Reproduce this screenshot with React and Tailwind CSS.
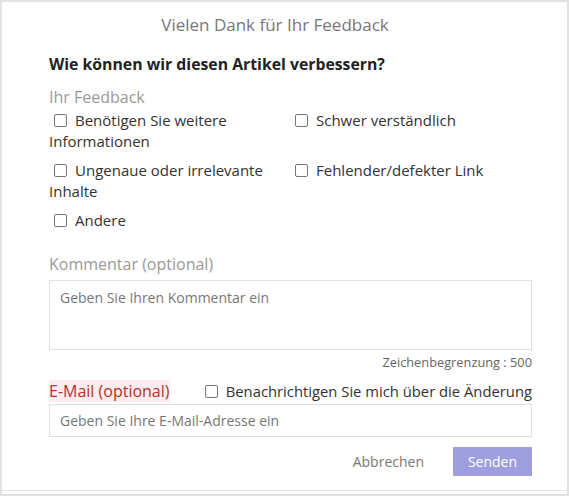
import React from "react";

function Box() {
  return (
    <span className="inline-block w-[13px] h-[13px] border-[1.5px] border-[#777] rounded-[2px] bg-white align-[-1px] mr-[8px]" />
  );
}

export default function App() {
  return (
    <div
      className="w-[569px] h-[496px] bg-[#e2e2e2] p-[2px]"
      style={{ fontFamily: '"Open Sans", "Noto Sans", sans-serif' }}
    >
      <div className="w-full h-full bg-white flex flex-col">
        <div className="flex-1 border-b border-[#e2e2e2] pl-[47px] pr-[35px] text-[#333]">
          <div className="text-center text-[17px] text-[#777] leading-[22px] mt-[12px] pr-[31px]">
            Vielen Dank für Ihr Feedback
          </div>
          <div className="text-[15.8px] font-bold text-[#222] leading-[20px] mt-[18px]">
            Wie können wir diesen Artikel verbessern?
          </div>
          <div className="text-[16px] text-[#999] leading-[22px] mt-[12px]">
            Ihr Feedback
          </div>
          <div className="grid grid-cols-[246px_1fr] text-[15px] text-[#333] gap-y-[8px] mt-[2px]">
            <div className="leading-[21px]">
              <span className="pl-[5px]"><Box /></span>Benötigen Sie weitere Informationen
            </div>
            <div className="leading-[21px]">
              <Box />Schwer verständlich
            </div>
            <div className="leading-[21px] pr-[20px]">
              <span className="pl-[5px]"><Box /></span>Ungenaue oder irrelevante Inhalte
            </div>
            <div className="leading-[21px]">
              <Box />Fehlender/defekter Link
            </div>
            <div className="leading-[21px]">
              <span className="pl-[5px]"><Box /></span>Andere
            </div>
          </div>
          <div className="text-[16px] text-[#999] leading-[22px] mt-[22px]">
            Kommentar (optional)
          </div>
          <div className="mt-[5px] h-[70px] border border-[#e0e0e0] px-[10px] pt-[6px] text-[14px] text-[#777] leading-[22px]">
            Geben Sie Ihren Kommentar ein
          </div>
          <div className="text-right text-[12.8px] text-[#666] leading-[18px] mt-[3px]">
            Zeichenbegrenzung : 500
          </div>
          <div className="flex items-center justify-between mt-[9px] leading-[22px]">
            <span className="text-[16px] text-[#b5322a] bg-[#fdecef]">E-Mail (optional)</span>
            <span className="text-[14.8px] text-[#333]">
              <Box />Benachrichtigen Sie mich über die Änderung
            </span>
          </div>
          <div className="mt-[2px] h-[33px] border border-[#e0e0e0] px-[10px] flex items-center text-[14px] text-[#777]">
            Geben Sie Ihre E-Mail-Adresse ein
          </div>
          <div className="flex justify-end items-center mt-[10px] gap-[29px]">
            <span className="text-[14px] text-[#777]">Abbrechen</span>
            <span className="w-[79px] h-[29px] bg-[#9e9edf] text-white text-[14px] flex items-center justify-center rounded-[1px]">
              Senden
            </span>
          </div>
        </div>
        <div className="h-[3px] bg-white" />
      </div>
    </div>
  );
}
